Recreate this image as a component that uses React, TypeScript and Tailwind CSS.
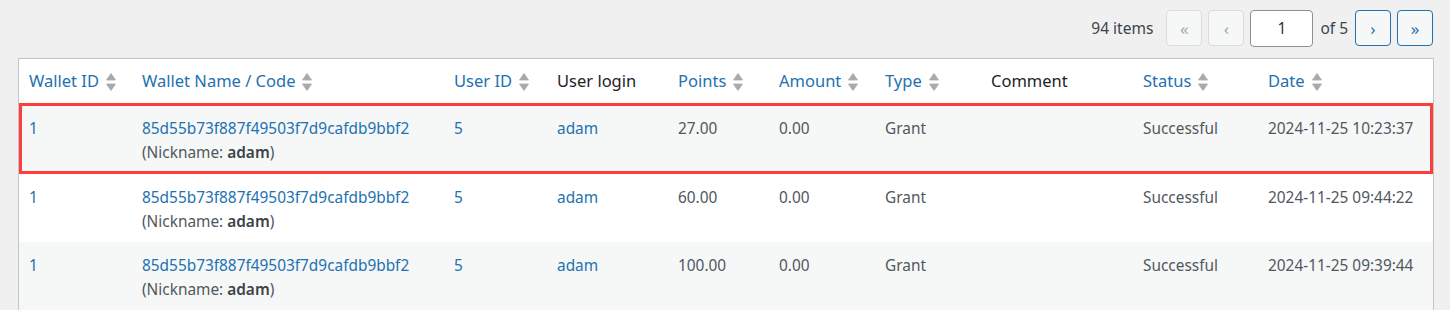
import React from "react";

const cols = "grid grid-cols-[113px_312px_103px_121px_101px_106px_106px_152px_125px_1fr]";

function SortIcon() {
  return (
    <svg width="10" height="18" viewBox="0 0 10 18" className="ml-[7px] shrink-0">
      <path d="M5 0.5 L9.5 7 L0.5 7 Z" fill="#a7aaad" strokeLinejoin="round" stroke="#a7aaad" strokeWidth="0.8" />
      <path d="M0.5 11 L9.5 11 L5 17.5 Z" fill="#a7aaad" strokeLinejoin="round" stroke="#a7aaad" strokeWidth="0.8" />
    </svg>
  );
}

function Th({ label, sortable = true }: { label: string; sortable?: boolean }) {
  return (
    <div className="flex items-center px-[10px]">
      <span className={sortable ? "text-[#2271b1]" : "text-[#1d2327]"}>{label}</span>
      {sortable && <SortIcon />}
    </div>
  );
}

type Row = { points: string; date: string };

const rows: Row[] = [
  { points: "27.00", date: "2024-11-25 10:23:37" },
  { points: "60.00", date: "2024-11-25 09:44:22" },
  { points: "100.00", date: "2024-11-25 09:39:44" },
];

function BodyRow({ r, i }: { r: Row; i: number }) {
  const bg = i % 2 === 0 ? "bg-[#f6f7f7]" : "bg-white";
  const extra =
    i === 0
      ? "h-[71px] pt-[14px] outline-3 outline-solid outline-[#ff3d3d] -outline-offset-3 relative"
      : "h-[68px] pt-[12px]";
  return (
    <div className={`${cols} ${bg} ${extra} leading-[24px] text-[15.4px] text-[#50575e]`}>
      <div className="px-[10px] text-[#2271b1]">1</div>
      <div className="px-[10px]">
        <div className="text-[#2271b1]">85d55b73f887f49503f7d9cafdb9bbf2</div>
        <div>
          (Nickname: <span className="font-semibold text-[#3c434a]">adam</span>)
        </div>
      </div>
      <div className="px-[10px] text-[#2271b1]">5</div>
      <div className="px-[10px] text-[#2271b1]">adam</div>
      <div className="px-[10px]">{r.points}</div>
      <div className="px-[10px]">0.00</div>
      <div className="px-[10px]">Grant</div>
      <div className="px-[10px]"></div>
      <div className="px-[10px]">Successful</div>
      <div className="px-[10px] whitespace-nowrap">{r.date}</div>
    </div>
  );
}

function PageBtn({ label, enabled }: { label: string; enabled: boolean }) {
  return (
    <div
      className={
        "flex h-[36px] w-[36px] items-center justify-center rounded-[4px] border bg-[#f6f7f7] text-[17px] leading-none " +
        (enabled ? "border-[#2271b1] text-[#2271b1]" : "border-[#dcdcde] text-[#a7aaad]")
      }
    >
      {label}
    </div>
  );
}

export default function App() {
  return (
    <div
      className="min-h-[310px] bg-[#f0f0f1] pl-[18px] pr-[17px] pt-[10px]"
      style={{ fontFamily: '"Noto Sans", "Open Sans", sans-serif' }}
    >
      <div className="flex h-[36px] items-center justify-end text-[15.5px] text-[#3c434a]">
        <span className="mr-[13px] pt-[2px]">94 items</span>
        <PageBtn label="«" enabled={false} />
        <div className="w-[6px]" />
        <PageBtn label="‹" enabled={false} />
        <div className="ml-[6px] flex h-[37px] w-[63px] items-center justify-center rounded-[4px] border border-[#8c8f94] bg-white pt-[1px] text-[#2c3338]">
          1
        </div>
        <span className="mx-[7px] pt-[2px]">of 5</span>
        <PageBtn label="›" enabled={true} />
        <div className="w-[6px]" />
        <PageBtn label="»" enabled={true} />
      </div>

      <div className="mr-[-1px] mt-[12px] border border-[#c3c4c7] bg-white">
        <div className={`${cols} h-[44px] pt-[1px] text-[16.5px]`}>
          <Th label="Wallet ID" />
          <Th label="Wallet Name / Code" />
          <Th label="User ID" />
          <Th label="User login" sortable={false} />
          <Th label="Points" />
          <Th label="Amount" />
          <Th label="Type" />
          <Th label="Comment" sortable={false} />
          <Th label="Status" />
          <Th label="Date" />
        </div>
        {rows.map((r, i) => (
          <BodyRow key={i} r={r} i={i} />
        ))}
      </div>
    </div>
  );
}
